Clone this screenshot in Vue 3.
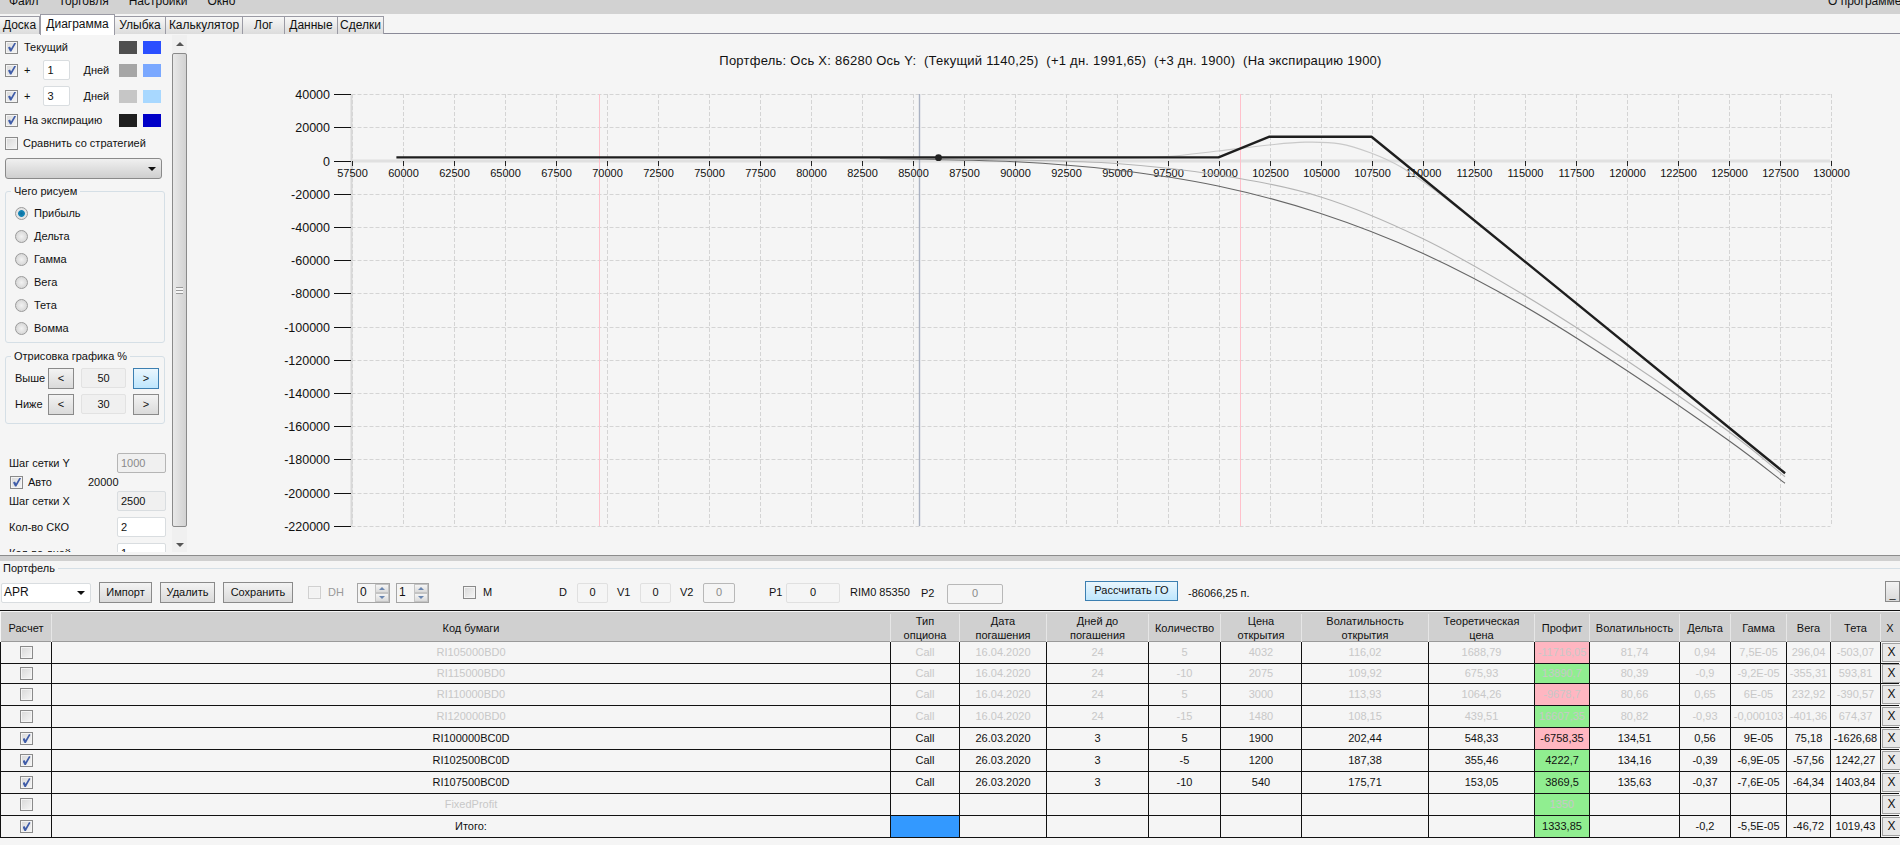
<template>
  <div class="app">
    <div class="menu">
      <span v-for="m in menuItems" :key="m" class="menu-item">{{ m }}</span>
      <span class="menu-item about">О программе</span>
    </div>

    <div class="tabs">
      <span v-for="t in tabs" :key="t.name" class="tab" :class="{ active: t.active }" :style="{ width: t.w + 'px' }">{{ t.name }}</span>
    </div>

    <div class="main">
      <div class="side">
        <div class="series">
          <div class="row">
            <span class="chk on"></span><span class="lbl">Текущий</span>
            <span class="swatch sw-first" style="background:#4f4f4f"></span><span class="swatch" style="background:#2a4fff"></span>
          </div>
          <div class="row">
            <span class="chk on"></span><span class="lbl">+</span>
            <span class="input day-input">1</span><span class="days">Дней</span>
            <span class="swatch sw-first" style="background:#a6a6a6"></span><span class="swatch" style="background:#7aa8ff"></span>
          </div>
          <div class="row">
            <span class="chk on"></span><span class="lbl">+</span>
            <span class="input day-input">3</span><span class="days">Дней</span>
            <span class="swatch sw-first" style="background:#c6c6c6"></span><span class="swatch" style="background:#a8d8ff"></span>
          </div>
          <div class="row">
            <span class="chk on"></span><span class="lbl">На экспирацию</span>
            <span class="swatch sw-first" style="background:#1e1e1e"></span><span class="swatch" style="background:#0000c8"></span>
          </div>
          <div class="row">
            <span class="chk"></span><span class="lbl compare">Сравнить со стратегией</span>
          </div>
        </div>

        <div class="combo"><i class="arrow"></i></div>

        <fieldset class="group draw-what">
          <legend>Чего рисуем</legend>
          <div v-for="(r, i) in radios" :key="r" class="radio-row">
            <span class="radio" :class="{ on: i === 0 }"></span>{{ r }}
          </div>
        </fieldset>

        <fieldset class="group draw-pct">
          <legend>Отрисовка графика %</legend>
          <div class="pct-row">
            <span class="pct-lbl">Выше</span>
            <span class="btn pct-btn">&lt;</span>
            <span class="input pct-field">50</span>
            <span class="btn pct-btn hot">&gt;</span>
          </div>
          <div class="pct-row">
            <span class="pct-lbl">Ниже</span>
            <span class="btn pct-btn">&lt;</span>
            <span class="input pct-field">30</span>
            <span class="btn pct-btn">&gt;</span>
          </div>
        </fieldset>

        <div class="params">
          <div class="param"><span>Шаг сетки Y</span><span class="input par-input off">1000</span></div>
          <div class="param auto"><span class="chk on"></span><span class="auto-lbl">Авто</span><span class="auto-val">20000</span></div>
          <div class="param"><span>Шаг сетки X</span><span class="input par-input gray">2500</span></div>
          <div class="param"><span>Кол-во СКО</span><span class="input par-input">2</span></div>
          <div class="param"><span>Кол-во дней</span><span class="input par-input">1</span></div>
        </div>
      </div>

      <div class="scrollbar">
        <div class="sb-btn"><i class="sb-up"></i></div>
        <div class="sb-thumb"><i></i></div>
        <div class="sb-btn sb-end"><i class="sb-down"></i></div>
      </div>

      <svg class="chart" viewBox="187 35 1713 520" width="1713" height="520">
        <text class="title" x="1050.5" y="65" text-anchor="middle">{{ chartTitle }}</text>

        <line v-for="t in yTicks" :key="'g' + t.v" class="grid" x1="351.5" x2="1830.5" :y1="t.y" :y2="t.y" />
        <line v-for="t in xTicks" :key="'v' + t.v" class="grid" y1="94" y2="526" :x1="t.x" :x2="t.x" />

        <line class="band" x1="351" x2="1830" y1="161" y2="161" />
        <line class="band band-v" x1="351.5" x2="351.5" y1="94" y2="526" />

        <line x1="599.5" x2="599.5" y1="94" y2="526" stroke="#ffc0cb" />
        <line x1="1240.5" x2="1240.5" y1="94" y2="526" stroke="#ffc0cb" />
        <line x1="919.5" x2="919.5" y1="94" y2="526" stroke="#a9b1c2" stroke-width="1.4" />

        <g v-for="t in yTicks" :key="'y' + t.v">
          <line x1="334" x2="351" :y1="t.y" :y2="t.y" stroke="#111" />
          <text class="y-label" x="330" :y="t.y + 4.5" text-anchor="end">{{ t.v }}</text>
        </g>
        <g v-for="t in xTicks" :key="'x' + t.v">
          <line :x1="t.x" :x2="t.x" y1="161" y2="166" stroke="#222" />
          <text class="x-label" :x="t.x" y="177" text-anchor="middle">{{ t.v }}</text>
        </g>

        <path :d="curve(darkPts)" class="c-dark" />
        <path :d="curve(midPts)" class="c-mid" />
        <path :d="curve(lightPts)" class="c-light" />
        <polyline :points="expiry" class="c-exp" />
        <circle cx="938.5" cy="157.7" r="3.4" fill="#222" />
      </svg>
    </div>

    <div class="splitter"></div>

    <div class="portfolio-title"><span>Портфель</span><i></i></div>

    <div class="toolbar">
      <div class="input tb-combo">APR<i class="arrow"></i></div>
      <span class="btn ml8 w53">Импорт</span>
      <span class="btn ml8 w55">Удалить</span>
      <span class="btn ml8 w70">Сохранить</span>
      <span class="chk dis ml15"></span>
      <span class="ml7 dh">DH</span>
      <div v-for="(s, i) in [0, 1]" :key="s" class="spin" :class="i === 0 ? 'ml14' : 'ml6'">
        <span>{{ s }}</span>
        <div class="spin-btns"><b><i class="sp-up"></i></b><b><i class="sp-down"></i></b></div>
      </div>
      <span class="chk ml34"></span>
      <span class="ml7 w8">M</span>
      <span class="ml68 w8">D</span>
      <span class="input fld ml10 w31">0</span>
      <span class="ml9 w13">V1</span>
      <span class="input fld ml10 w31">0</span>
      <span class="ml9 w13">V2</span>
      <span class="input fld dark ml10 w32">0</span>
      <span class="ml34 w12">P1</span>
      <span class="input fld ml5 w54">0</span>
      <span class="ml10 w59">RIM0 85350</span>
      <span class="ml12 w13 low">P2</span>
      <span class="input fld dark ml13 w56 low">0</span>
      <span class="btn hot calc ml82 w93">Рассчитать ГО</span>
      <span class="ml10 low">-86066,25 п.</span>
      <span class="btn min">_</span>
    </div>

    <div class="table">
      <div class="thead">
        <div v-for="h in headers" :key="h" class="th">{{ h }}</div>
      </div>
      <div v-for="(r, i) in rows" :key="i" class="tr" :class="{ muted: !r.on, short: i === 1 }">
        <div class="td"><span class="chk" :class="{ on: r.on }"></span></div>
        <div class="td">{{ r.code }}</div>
        <div class="td" :class="{ blue: r.total }">{{ r.type }}</div>
        <div class="td">{{ r.date }}</div>
        <div class="td">{{ r.days }}</div>
        <div class="td">{{ r.qty }}</div>
        <div class="td">{{ r.open }}</div>
        <div class="td">{{ r.vol0 }}</div>
        <div class="td">{{ r.theo }}</div>
        <div class="td" :class="r.loss ? 'loss' : 'gain'">{{ r.profit }}</div>
        <div class="td">{{ r.vol }}</div>
        <div class="td">{{ r.delta }}</div>
        <div class="td">{{ r.gamma }}</div>
        <div class="td">{{ r.vega }}</div>
        <div class="td">{{ r.theta }}</div>
        <div class="td x-cell"><span class="x-btn">X</span></div>
      </div>
    </div>
  </div>
</template>

<script setup>
const menuItems = ['Файл', 'Торговля', 'Настройки', 'Окно']

const tabs = [
  { name: 'Доска', w: 40 },
  { name: 'Диаграмма', w: 75, active: true },
  { name: 'Улыбка', w: 51 },
  { name: 'Калькулятор', w: 77 },
  { name: 'Лог', w: 42 },
  { name: 'Данные', w: 53 },
  { name: 'Сделки', w: 46 }
]

const radios = ['Прибыль', 'Дельта', 'Гамма', 'Вега', 'Тета', 'Вомма']

const chartTitle = 'Портфель: Ось X: 86280 Ось Y:  (Текущий 1140,25)  (+1 дн. 1991,65)  (+3 дн. 1900)  (На экспирацию 1900)'

// chart scale, picked off the axis ticks
const px = (v) => 351.5 + ((v - 57500) * 51) / 2500
const py = (p) => 160.6 - p * 0.00166

const yTicks = []
for (let v = 40000; v >= -220000; v -= 20000) yTicks.push({ v, y: Math.round(py(v)) + 0.5 })

const xTicks = []
for (let v = 57500; v <= 130000; v += 2500) xTicks.push({ v, x: Math.round(px(v)) + 0.5 })

const expiry = [
  [59700, 1900], [100000, 1900], [102500, 14400], [107500, 14400], [127775, -188350]
].map(([v, p]) => `${px(v).toFixed(1)},${py(p).toFixed(1)}`).join(' ')

const darkPts = [
  [880, 158.5], [1014, 161.7], [1116, 170], [1218, 186], [1320, 213.3], [1422, 253],
  [1524, 306], [1626, 370], [1728, 440], [1785, 483.3]
]
const midPts = [
  [880, 158], [1014, 160], [1116, 163.5], [1218, 175], [1320, 196.7], [1422, 238.3],
  [1524, 295], [1626, 360], [1728, 431], [1785, 476.7]
]
const lightPts = [
  [880, 158], [1116, 157.8], [1167, 156.5], [1218, 151], [1269, 145], [1305, 142.2], [1340, 143.8],
  [1371, 153], [1401, 167], [1437, 191.7], [1460, 210]
]

// catmull-rom through the points
const curve = (pts) => {
  let d = `M${pts[0][0]} ${pts[0][1]}`
  for (let i = 0; i < pts.length - 1; i++) {
    const p0 = pts[Math.max(i - 1, 0)]
    const p1 = pts[i]
    const p2 = pts[i + 1]
    const p3 = pts[Math.min(i + 2, pts.length - 1)]
    const c1x = p1[0] + (p2[0] - p0[0]) / 6
    const c1y = p1[1] + (p2[1] - p0[1]) / 6
    const c2x = p2[0] - (p3[0] - p1[0]) / 6
    const c2y = p2[1] - (p3[1] - p1[1]) / 6
    d += ` C${c1x} ${c1y} ${c2x} ${c2y} ${p2[0]} ${p2[1]}`
  }
  return d
}

const headers = [
  'Расчет', 'Код бумаги', 'Тип опциона', 'Дата погашения', 'Дней до погашения', 'Количество',
  'Цена открытия', 'Волатильность открытия', 'Теоретическая цена', 'Профит', 'Волатильность',
  'Дельта', 'Гамма', 'Вега', 'Тета', 'X'
]

const opt = (code, date, days, qty, open, vol0, theo, profit, vol, delta, gamma, vega, theta, on) => ({
  code, type: 'Call', date, days, qty, open, vol0, theo, profit, vol, delta, gamma, vega, theta, on,
  loss: profit.startsWith('-')
})

const rows = [
  opt('RI105000BD0', '16.04.2020', 24, 5, 4032, '116,02', '1688,79', '-11716,05', '81,74', '0,94', '7,5E-05', '296,04', '-503,07', false),
  opt('RI115000BD0', '16.04.2020', 24, -10, 2075, '109,92', '675,93', '13890,7', '80,39', '-0,9', '-9,2E-05', '-355,31', '593,81', false),
  opt('RI110000BD0', '16.04.2020', 24, 5, 3000, '113,93', '1064,26', '-9678,7', '80,66', '0,65', '6E-05', '232,92', '-390,57', false),
  opt('RI120000BD0', '16.04.2020', 24, -15, 1480, '108,15', '439,51', '16607,35', '80,82', '-0,93', '-0,000103', '-401,36', '674,37', false),
  opt('RI100000BC0D', '26.03.2020', 3, 5, 1900, '202,44', '548,33', '-6758,35', '134,51', '0,56', '9E-05', '75,18', '-1626,68', true),
  opt('RI102500BC0D', '26.03.2020', 3, -5, 1200, '187,38', '355,46', '4222,7', '134,16', '-0,39', '-6,9E-05', '-57,56', '1242,27', true),
  opt('RI107500BC0D', '26.03.2020', 3, -10, 540, '175,71', '153,05', '3869,5', '135,63', '-0,37', '-7,6E-05', '-64,34', '1403,84', true),
  { code: 'FixedProfit', profit: '1350', on: false },
  { code: 'Итого:', profit: '1333,85', on: true, total: true, delta: '-0,2', gamma: '-5,5E-05', vega: '-46,72', theta: '1019,43' }
]
</script>

<style>
html, body {
  margin: 0;
  background: #f5f5f5;
}
</style>

<style scoped>
.app {
  width: 1900px;
  height: 845px;
  overflow: hidden;
  background: #f5f5f5;
  color: #111;
  font: 11px/13px "Liberation Sans", Arial, sans-serif;
}

/* menu, scrolled off the top of the capture */
.menu {
  height: 14px;
  background: #d2d2d2;
  display: flex;
  overflow: hidden;
  padding-left: 9px;
  gap: 20px;
  font-size: 12px;
}
.menu-item {
  margin-top: -6px;
  line-height: 14px;
}
.about {
  margin-left: auto;
  width: 72px;
  white-space: nowrap;
}

.tabs {
  height: 21px;
  display: flex;
  align-items: flex-end;
  background: linear-gradient(#f5f5f5 19px, #8a8a98 19px, #8a8a98 20px, #f5f5f5 20px);
  font-size: 12px;
}
.tab {
  box-sizing: border-box;
  height: 18px;
  margin-bottom: 1px;
  text-align: center;
  line-height: 17px;
  border: 1px solid #9a9aa4;
  border-bottom: 0;
  border-left: 0;
  background: linear-gradient(#f7f7f7, #dcdcdc);
  white-space: nowrap;
}
.tab.active {
  height: 21px;
  margin-bottom: 0;
  border-left: 1px solid #9a9aa4;
  background: #fff;
  line-height: 18px;
}

.main {
  height: 520px;
  display: flex;
}
.side {
  width: 172px;
  height: 517px;
  overflow: hidden;
  flex: none;
}

.series {
  display: grid;
  grid-template-rows: 24px 22px 30px 18px 28px;
  padding: 0 11px 0 5px;
}
.row {
  display: flex;
  align-items: center;
}
.lbl {
  margin-left: 6px;
}
.compare {
  margin-left: 5px;
}
.swatch {
  width: 18px;
  height: 13px;
  margin-left: 6px;
}
.sw-first {
  margin-left: auto;
}
.day-input {
  width: 27px;
  height: 20px;
  margin-left: 13px;
}
.days {
  margin-left: 13px;
}

.chk {
  position: relative;
  box-sizing: border-box;
  display: inline-block;
  flex: none;
  width: 13px;
  height: 13px;
  border: 1px solid #8a8a8a;
  background: linear-gradient(135deg, #d8d8d8, #f6f6f6);
  box-shadow: inset 0 0 0 1px #f4f4f4;
}
.chk.on::after {
  content: "";
  position: absolute;
  left: 2px;
  top: 1px;
  width: 8px;
  height: 9px;
  background: #3f5ca8;
  clip-path: polygon(0 55%, 25% 45%, 38% 68%, 82% 0, 100% 8%, 42% 100%, 25% 100%);
}
.chk.dis {
  border-color: #d0d0d0;
  background: #f2f2f2;
}

.input {
  box-sizing: border-box;
  display: inline-flex;
  align-items: center;
  padding-left: 3px;
  background: #fff;
  border: 1px solid #d9dde0;
  border-radius: 2px;
}

.combo {
  position: relative;
  box-sizing: border-box;
  width: 157px;
  height: 21px;
  margin: 1px 0 0 5px;
  border: 1px solid #8a8a8a;
  border-radius: 3px;
  background: linear-gradient(#f0f0f0, #cfcfcf);
}
.arrow {
  position: absolute;
  right: 5px;
  top: 8px;
  width: 0;
  height: 0;
  border: 4px solid transparent;
  border-top: 4px solid #111;
  border-bottom: 0;
}

.group {
  box-sizing: border-box;
  margin: 0 0 0 5px;
  padding: 0;
  width: 160px;
  border: 1px solid #d5dfe6;
  border-radius: 3px;
  min-inline-size: 0;
}
.group legend {
  padding: 0 3px;
  margin-left: 5px;
  line-height: 13px;
}
.draw-what {
  margin-top: 6px;
  height: 158px;
  padding-top: 4px;
}
.radio-row {
  height: 23px;
  display: flex;
  align-items: center;
  padding-left: 9px;
}
.radio {
  box-sizing: border-box;
  width: 13px;
  height: 13px;
  margin-right: 6px;
  border: 1px solid #9a9a9a;
  border-radius: 50%;
  background: radial-gradient(circle at 50% 50%, #f2f2f2, #cdcdcd);
}
.radio.on {
  background: radial-gradient(circle, #0b6f9f 0, #1687b8 3px, #e4e4e4 3.8px);
}
.draw-pct {
  margin-top: 7px;
  height: 74px;
  padding-top: 5px;
}
.pct-row {
  display: flex;
  align-items: center;
  height: 20px;
  padding-left: 9px;
}
.pct-row + .pct-row {
  margin-top: 6px;
}
.pct-lbl {
  width: 33px;
}
.pct-btn {
  width: 26px;
  height: 20px;
}
.pct-field {
  width: 45px;
  height: 20px;
  margin: 0 7px;
  padding: 0;
  justify-content: center;
  background: #f0f0f0;
  border-color: #e2e2e2;
}

.btn {
  box-sizing: border-box;
  display: inline-flex;
  align-items: center;
  justify-content: center;
  height: 21px;
  border: 1px solid #8a8a8a;
  background: linear-gradient(#f3f3f3, #dadada);
}
.btn.hot {
  border-color: #3c7fb1;
  background: linear-gradient(#eaf6fd, #bee6fd);
}

.params {
  margin-top: 27px;
  padding-left: 9px;
  display: grid;
  grid-template-rows: 24px 14px 24px 28px 24px;
}
.param {
  display: flex;
  align-items: center;
  justify-content: space-between;
  width: 157px;
}
.par-input {
  width: 49px;
  height: 20px;
}
.par-input.off {
  background: #f0f0f0;
  border-color: #b5b5b5;
  color: #8a8a8a;
}
.par-input.gray {
  background: #f0f0f0;
}
.auto {
  justify-content: flex-start;
  padding-left: 1px;
}
.auto-lbl {
  margin-left: 5px;
}
.auto-val {
  margin-left: 36px;
}

.scrollbar {
  width: 15px;
  height: 517px;
  flex: none;
  display: flex;
  flex-direction: column;
  background: #f0f0f0;
}
.sb-btn {
  height: 18px;
  flex: none;
  display: flex;
  align-items: center;
  justify-content: center;
}
.sb-end {
  height: 25px;
  align-items: flex-end;
  padding-bottom: 5px;
  box-sizing: border-box;
}
.sb-up, .sb-down {
  width: 0;
  height: 0;
  border: 4px solid transparent;
}
.sb-up {
  border-bottom: 4px solid #555;
  border-top: 0;
}
.sb-down {
  border-top: 4px solid #555;
  border-bottom: 0;
}
.sb-thumb {
  flex: 1;
  border: 1px solid #8a8a8a;
  border-radius: 2px;
  background: linear-gradient(90deg, #e8e8e8, #d2d2d2);
  display: flex;
  align-items: center;
  justify-content: center;
}
.sb-thumb i {
  width: 7px;
  height: 5px;
  border-top: 1px solid #999;
  border-bottom: 1px solid #999;
  background: linear-gradient(#f5f5f5 2px, #999 2px, #999 3px, #f5f5f5 3px);
}

.chart {
  display: block;
  flex: none;
}
.title {
  font-size: 13px;
  letter-spacing: 0.25px;
  white-space: pre;
  fill: #111;
}
.grid {
  stroke: #d4d4d4;
  stroke-dasharray: 4 2;
}
.band {
  stroke: #e0e0e0;
  stroke-width: 3;
}
.band-v {
  stroke: #d8d8d8;
  stroke-width: 2;
}
.y-label {
  font-size: 12.5px;
  fill: #111;
}
.x-label {
  font-size: 11px;
  fill: #111;
}
.c-dark, .c-mid, .c-light, .c-exp {
  fill: none;
}
.c-dark {
  stroke: #666;
  stroke-width: 1.1;
}
.c-mid {
  stroke: #b4b4b4;
  stroke-width: 1.1;
}
.c-light {
  stroke: #c9c9c9;
  stroke-width: 1.2;
}
.c-exp {
  stroke: #1e1e1e;
  stroke-width: 2.4;
  stroke-linejoin: round;
}

.splitter {
  height: 5px;
  border-top: 1px solid #8c8c8c;
  background: #d0d0d0;
}

.portfolio-title {
  height: 14px;
  padding-left: 3px;
  display: flex;
  align-items: center;
}
.portfolio-title i {
  flex: 1;
  height: 1px;
  margin-left: 3px;
  background: #d5dfe6;
}

.toolbar {
  height: 35px;
  padding-left: 1px;
  display: flex;
  align-items: center;
}
.toolbar > * {
  flex: none;
}
.tb-combo {
  position: relative;
  width: 90px;
  height: 20px;
  padding-left: 2px;
  font-size: 12px;
}
.tb-combo .arrow {
  top: 7px;
}
.dh {
  color: #9a9a9a;
  width: 15px;
}
.spin {
  box-sizing: border-box;
  width: 33px;
  height: 20px;
  display: flex;
  justify-content: space-between;
  padding-left: 2px;
  align-items: center;
  border: 1px solid #a5a5a5;
  background: #f5f5f5;
  font-size: 12px;
}
.spin-btns {
  display: flex;
  flex-direction: column;
  width: 14px;
  height: 18px;
  flex: none;
}
.spin-btns b {
  flex: 1;
  display: flex;
  align-items: center;
  justify-content: center;
  background: linear-gradient(#f5f5f5, #dadada);
  border: 1px solid #c4c4c4;
}
.sp-up, .sp-down {
  width: 0;
  height: 0;
  border: 3px solid transparent;
}
.sp-up {
  border-bottom: 3px solid #6a86b0;
  border-top: 0;
}
.sp-down {
  border-top: 3px solid #6a86b0;
  border-bottom: 0;
}
.fld {
  height: 20px;
  padding: 0;
  justify-content: center;
  background: #f5f5f5;
  border-color: #e0e0e0;
}
.fld.dark {
  border-color: #b8b8b8;
  color: #8a8a8a;
}
.low {
  position: relative;
  top: 1px;
}
.calc {
  position: relative;
  top: -2px;
  height: 20px;
}
.min {
  margin-left: auto;
  width: 15px;
  height: 21px;
  margin-top: -2px;
  align-items: flex-end;
}
.ml5 { margin-left: 5px; }
.ml6 { margin-left: 6px; }
.ml7 { margin-left: 7px; }
.ml8 { margin-left: 8px; }
.ml9 { margin-left: 9px; }
.ml10 { margin-left: 10px; }
.ml12 { margin-left: 12px; }
.ml13 { margin-left: 13px; }
.ml14 { margin-left: 14px; }
.ml15 { margin-left: 15px; }
.ml34 { margin-left: 34px; }
.ml68 { margin-left: 68px; }
.ml82 { margin-left: 82px; }
.w8 { width: 8px; }
.w12 { width: 12px; }
.w13 { width: 13px; }
.w31 { width: 31px; }
.w32 { width: 32px; }
.w53 { width: 53px; }
.w54 { width: 54px; }
.w55 { width: 55px; }
.w56 { width: 56px; }
.w59 { width: 59px; white-space: nowrap; }
.w70 { width: 70px; }
.w93 { width: 93px; }

.table {
  border-top: 1px solid #111;
  padding: 1px 0 0 1px;
  height: 235px;
  box-sizing: border-box;
}
.thead, .tr {
  display: grid;
  grid-template-columns: 51px 839px 69px 87px 102px 72px 81px 127px 106px 55px 90px 51px 56px 44px 50px 18px;
}
.thead {
  height: 30px;
  background: #d0d0d0;
  border-bottom: 1px solid #9a9a9a;
  box-sizing: border-box;
  padding-top: 2px;
}
.th {
  display: flex;
  align-items: center;
  justify-content: center;
  text-align: center;
  line-height: 14px;
  padding: 0 3px;
  border-right: 1px solid #e6e6e6;
  box-sizing: border-box;
}
.th:last-child {
  border-right: 0;
}
.tr {
  height: 22px;
  border-left: 1px solid #111;
  margin-left: -1px;
}
.tr.short {
  height: 20px;
}
.td {
  box-sizing: border-box;
  display: flex;
  align-items: center;
  justify-content: center;
  border-right: 1px solid #111;
  border-bottom: 1px solid #111;
  white-space: nowrap;
}
.muted .td {
  color: #c8c8c8;
}
.loss {
  background: #ffb6c1;
}
.gain {
  background: #90ee90;
}
.blue {
  background: #3399ff;
}
.x-cell {
  border-right: 0;
  justify-content: flex-start;
  padding-left: 1px;
}
.x-btn {
  box-sizing: border-box;
  width: 19px;
  height: 19px;
  flex: none;
  display: flex;
  align-items: center;
  justify-content: center;
  border: 1px solid #a0a0a0;
  background: #e8e8e8;
  color: #111;
  font-size: 12px;
}
</style>
